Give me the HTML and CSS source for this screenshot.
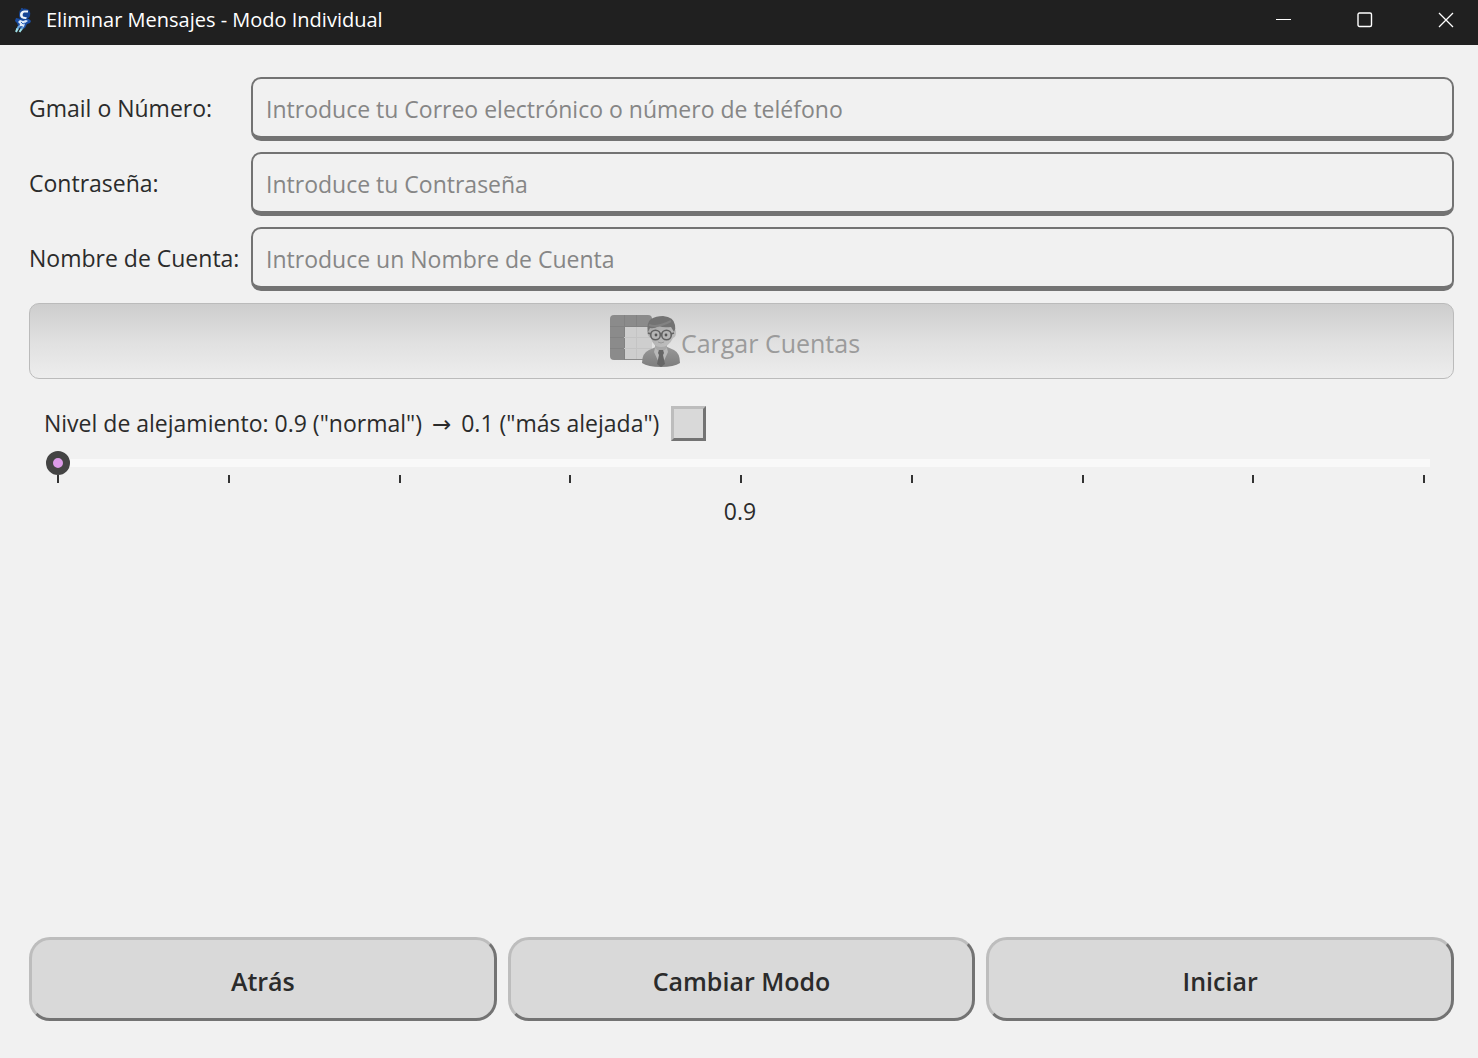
FILE: index.html
```html
<!DOCTYPE html>
<html lang="es">
<head>
  <meta charset="UTF-8">
  <meta name="viewport" content="width=device-width, initial-scale=1.0">
  <title>Eliminar Mensajes - Modo Individual</title>
  <link rel="stylesheet" href="styles.css">
</head>
<body>
  <header class="titlebar">
    <svg class="app-icon" width="18" height="26" viewBox="0 0 18 26" aria-hidden="true">
      <path d="M8 1v3" stroke="#24509a" stroke-width="1.500"/>
      <path d="M2 11l5 1h8l2 2-1 2-3 1-2 4-3 1-3-1-2-5-2-2z" fill="#1b4fa6"/>
      <path d="M6 3q5-3 9 0 2 3 1 6-2 4-7 4-4-1-4-5 0-3 1-5z" fill="#174594"/>
      <path d="M6 8q0-4 4-4.500h4v2h-4q-2 1-1 4l4 1-1 1.500q-6 0-6-4z" fill="#f0f6fc"/>
      <path d="M6 13l3 1 3-1 2 1-3 2-1 4-3-1-2 1 1-3-2-2z" fill="#dce9f8"/>
      <path d="M7 15l2 2 2-1" fill="none" stroke="#2862b8"/>
      <path d="M5 19l-2 4M9 20l-2 3" stroke="#6aa5d8" stroke-width="2.200"/>
      <path d="M3.500 21.500L2 25M7.500 22l-2 3" stroke="#a0e2e9" stroke-width="2"/>
    </svg>
    <h1 class="window-title">Eliminar Mensajes - Modo Individual</h1>
    <div class="window-controls">
      <button class="window-btn" type="button" aria-label="Minimizar">
        <svg width="16" height="16" viewBox="0 0 16 16"><path d="M0 7.500h15" stroke="#fff"/></svg>
      </button>
      <button class="window-btn" type="button" aria-label="Maximizar">
        <svg width="16" height="16" viewBox="0 0 16 16"><rect x="1" y="1" width="13.500" height="13.500" rx="1.500" fill="none" stroke="#fff" stroke-width="1.400"/></svg>
      </button>
      <button class="window-btn" type="button" aria-label="Cerrar">
        <svg width="16" height="16" viewBox="0 0 16 16"><path d="M1 1l14 14M15 1L1 15" stroke="#fff" stroke-width="1.300"/></svg>
      </button>
    </div>
  </header>

  <main class="content">
    <form class="account-form">
      <label for="email">Gmail o Número:</label>
      <input class="field" type="text" id="email" placeholder="Introduce tu Correo electrónico o número de teléfono">
      <label for="password">Contraseña:</label>
      <input class="field" type="password" id="password" placeholder="Introduce tu Contraseña">
      <label for="account">Nombre de Cuenta:</label>
      <input class="field" type="text" id="account" placeholder="Introduce un Nombre de Cuenta">
    </form>

    <button class="load-btn" type="button" disabled>
      <svg width="72" height="54" viewBox="0 0 72 54" aria-hidden="true">
        <defs>
          <linearGradient id="suit" x1="0" y1="0" x2="0" y2="1">
            <stop offset="0" stop-color="#999"/>
            <stop offset="1" stop-color="#7d7d7d"/>
          </linearGradient>
          <linearGradient id="face" x1="0" y1="0" x2="1" y2="1">
            <stop offset="0" stop-color="#a6a6a6"/>
            <stop offset="1" stop-color="#c2c2c2"/>
          </linearGradient>
        </defs>
        <rect x="1" y="1" width="42" height="45" rx="4" fill="#8b8b8b"/>
        <path d="M15 13h28v32H15z" fill="#cecece"/>
        <path d="M1 12.500h42M1 23.500h14M1 34.500h14M15.500 1v45M27.500 1v11" stroke="#828282" fill="none"/>
        <path d="M15 23.500h28M15 34.500h28M27.500 13v32" stroke="#c4c4c4" fill="none"/>
        <path d="M33 49q0-10 7-13l9-4h7l9 4q6 3 6 13-6 4-19 4t-19-4z" fill="url(#suit)"/>
        <path d="M46 30h12v5l-6 6-6-6z" fill="#a8a8a8"/>
        <path d="M46 34l6 5 6-5 1 4-6 13h-2l-6-13z" fill="#b8b8b8"/>
        <path d="M50 36h4l1 3-1 2 2 9-4 3-4-3 2-9-1-2z" fill="#666"/>
        <path d="M39 15q-2 2 0 6 1 3 3 3 2 9 10 9t12-9q3-1 3-5 0-4-2-4L62 9H42z" fill="url(#face)"/>
        <path d="M39 18q-2-9 3-13 5-3 12-3 11 1 12 9 1 4-1 7l-3-5q-8 1-12-1-5 3-9 2z" fill="#737373"/>
        <path d="M40 11q9 3 22-4" fill="none" stroke="#828282" stroke-width="2"/>
        <circle cx="46.500" cy="21" r="4.800" fill="#b5b5b5" stroke="#636363" stroke-width="1.600"/>
        <circle cx="57.500" cy="21" r="4.800" fill="#b5b5b5" stroke="#636363" stroke-width="1.600"/>
        <path d="M51 20q1-1 2 0M39 19l3 1M62 20l3-1" fill="none" stroke="#636363" stroke-width="1.500"/>
        <circle cx="47" cy="21" r="1.400" fill="#555"/>
        <circle cx="57" cy="21" r="1.400" fill="#555"/>
        <path d="M49 28q3 2 6 0" fill="none" stroke="#999"/>
      </svg>
      <span>Cargar Cuentas</span>
    </button>

    <section class="zoom">
      <div class="zoom-header">
        <label for="zoom-level">Nivel de alejamiento: 0.9 ("normal") <span class="arrow">→</span> 0.1 ("más alejada")</label>
        <button class="help-btn" type="button" aria-label="Ayuda"></button>
      </div>
      <input class="slider" type="range" id="zoom-level" min="1" max="9" value="1">
      <div class="ticks">
        <i></i><i></i><i></i><i></i><i></i><i></i><i></i><i></i><i></i>
      </div>
      <output class="zoom-value" for="zoom-level">0.9</output>
    </section>

    <footer class="actions">
      <button class="action-btn" type="button">Atrás</button>
      <button class="action-btn" type="button">Cambiar Modo</button>
      <button class="action-btn" type="button">Iniciar</button>
    </footer>
  </main>

  <script>
    const slider = document.getElementById('zoom-level');
    const value = document.querySelector('.zoom-value');

    slider.addEventListener('input', () => {
      value.textContent = ((10 - slider.value) / 10).toFixed(1);
    });
  </script>
</body>
</html>
```
FILE: styles.css
```css
* {
  box-sizing: border-box;
}

body {
  margin: 0;
  min-height: 100vh;
  display: flex;
  flex-direction: column;
  background-color: #f1f1f1;
  color: #2b2b2b;
  font-family: "Open Sans", "Noto Sans", sans-serif;
  font-size: 23px;
  line-height: 32px;
}

button,
input {
  font: inherit;
  color: inherit;
}

.titlebar {
  display: flex;
  align-items: center;
  height: 45px;
  padding-left: 14px;
  padding-bottom: 6px;
  background-color: #202020;
  color: #fff;
}

.window-title {
  margin: 0 auto 0 14px;
  font-size: 20px;
  font-weight: 400;
}

.window-controls {
  display: flex;
}

.window-btn {
  display: flex;
  align-items: center;
  justify-content: center;
  width: 81px;
  height: 39px;
  padding: 0 0 0 16px;
  border: none;
  background: none;
}

.content {
  flex: 1;
  display: flex;
  flex-direction: column;
  padding: 32px 24px 37px 29px;
}

.account-form {
  display: grid;
  grid-template-columns: minmax(211px, max-content) 1fr;
  gap: 11px;
  align-items: center;
}

.account-form label {
  padding-bottom: 3px;
}

.field {
  width: 100%;
  height: 64px;
  padding: 2px 13px 0;
  border: 2px solid #737373;
  border-bottom-width: 5px;
  border-radius: 10px;
  background: none;
}

.field::placeholder {
  color: #868686;
  opacity: 1;
}

.load-btn {
  display: flex;
  align-items: center;
  justify-content: center;
  height: 76px;
  margin-top: 12px;
  padding: 0 14px 0 0;
  border: 1px solid #bbb;
  border-radius: 10px;
  background: linear-gradient(#cdcdcd, #e0e0e0 50%, #ededed);
  color: #9b9b9b;
  font-size: 25px;
}

.load-btn span {
  padding-top: 3px;
}

.zoom {
  display: flex;
  flex-direction: column;
  margin-top: 27px;
  padding: 0 18px 0 15px;
}

.zoom-header {
  display: flex;
  align-items: center;
  gap: 12px;
}

.arrow {
  padding: 0 4px;
  font-family: "DejaVu Sans", sans-serif;
}

.help-btn {
  width: 35px;
  height: 35px;
  padding: 0;
  border: 3px solid;
  border-color: #bdbdbd #737373 #737373 #bdbdbd;
  background-color: #d9d9d9;
}

.slider {
  appearance: none;
  height: 24px;
  margin: 10px 0 0 2px;
  background: linear-gradient(#f9f9f9, #f9f9f9) left center / calc(100% - 6px) 8px no-repeat;
}

.slider::-webkit-slider-thumb {
  appearance: none;
  width: 24px;
  height: 24px;
  border: 7px solid #444;
  border-radius: 50%;
  background-color: #dc9be8;
}

.ticks {
  display: flex;
  justify-content: space-between;
  padding: 0 11px 0 13px;
}

.ticks i {
  width: 2px;
  height: 8px;
  background-color: #333;
}

.zoom-value {
  align-self: center;
  margin-top: 12px;
}

.actions {
  display: grid;
  grid-template-columns: repeat(3, 1fr);
  gap: 11px;
  margin-top: auto;
}

.action-btn {
  height: 84px;
  padding-top: 4px;
  border: 3px solid;
  border-color: #bdbdbd #737373 #737373 #bdbdbd;
  border-radius: 21px;
  background-color: #d9d9d9;
  font-size: 25px;
  font-weight: 600;
}
```
